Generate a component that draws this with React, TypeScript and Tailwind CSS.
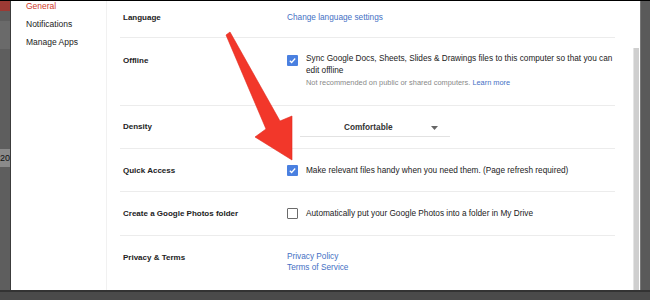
const font = { fontFamily: '"Liberation Sans", Arial, sans-serif' }

function Check({ on }: { on: boolean }) {
  if (!on) {
    return <span className="block w-[11px] h-[11px] shrink-0 rounded-[1px] border-[1.5px] border-[#6b6b6b] bg-white" />
  }
  return (
    <span className="flex w-[11px] h-[11px] shrink-0 items-center justify-center rounded-[1px] bg-[#4a80e0]">
      <svg width="9" height="9" viewBox="0 0 10 10">
        <path d="M2 5.2l2 2 4-4.4" fill="none" stroke="#fff" strokeWidth="1.4" />
      </svg>
    </span>
  )
}

function Row({ label, h, top, children, last }: { label: string; h: number; top: number; children: React.ReactNode; last?: boolean }) {
  return (
    <div
      className={`flex ${last ? '' : 'border-b border-[#ececec]'}`}
      style={{ height: h, paddingTop: top }}
    >
      <div className="w-[167px] pl-[3px] font-bold text-[8px] leading-[13px] text-[#222]">{label}</div>
      <div className="flex-1">{children}</div>
    </div>
  )
}

export default function App() {
  return (
    <div className="relative w-[650px] h-[300px] overflow-hidden bg-[#565656]" style={font}>
      <div className="h-[1px] bg-black" />
      <div className="flex h-[289px]">
        {/* background strip of the page behind the dialog */}
        <div className="w-[11px] flex flex-col border-r border-[#3c3c3c] bg-[#5e5e5e]">
          <div className="h-[10px] bg-[#9c3a34]" />
          <div className="h-[28px] mt-[10px] bg-[#6a6a6a]" />
          <div className="mt-[100px] h-[18px] bg-[#8a8a8a] text-[9px] leading-[18px] text-[#111] overflow-hidden">20</div>
        </div>
        <div className="flex flex-1 bg-white">
          <div className="w-[96px] border-r border-[#f1f1f1] pl-[15px] text-[8.5px] leading-[18px] text-[#222]">
            <div className="-mt-[4px] text-[#d0392b]">General</div>
            <div>Notifications</div>
            <div>Manage Apps</div>
          </div>
          <div className="flex-1 flex">
            <div className="w-[495px] ml-[13px] text-[8.25px] text-[#222]">
              <Row label="Language" h={37} top={10}>
                <a className="block leading-[13px] text-[#4470c4]">Change language settings</a>
              </Row>
              <Row label="Offline" h={68} top={16}>
                <div className="flex gap-[8px] pt-[1px]">
                  <Check on />
                  <div className="leading-[12px] -mt-[2px]">
                    <div>Sync Google Docs, Sheets, Slides &amp; Drawings files to this computer so that you can edit offline</div>
                    <div className="text-[7.4px] text-[#888]">
                      Not recommended on public or shared computers. <span className="text-[#4470c4]">Learn more</span>
                    </div>
                  </div>
                </div>
              </Row>
              <Row label="Density" h={43} top={14}>
                <div className="ml-[13px] w-[150px] h-[17px] flex items-center border-b border-[#e2e2e2] pl-[44px] pr-[12px] font-bold text-[#333]">
                  <span className="flex-1">Comfortable</span>
                  <svg width="7" height="4" viewBox="0 0 7 4"><path d="M0 0h7L3.5 4z" fill="#666" /></svg>
                </div>
              </Row>
              <Row label="Quick Access" h={43} top={15}>
                <div className="flex items-center gap-[8px] leading-[13px]">
                  <Check on />
                  <span>Make relevant files handy when you need them. (Page refresh required)</span>
                </div>
              </Row>
              <Row label="Create a Google Photos folder" h={44} top={15}>
                <div className="flex items-center gap-[8px] leading-[13px]">
                  <Check on={false} />
                  <span>Automatically put your Google Photos into a folder in My Drive</span>
                </div>
              </Row>
              <Row label="Privacy & Terms" h={54} top={15} last>
                <div className="leading-[11px] text-[#4470c4]">
                  <div>Privacy Policy</div>
                  <div>Terms of Service</div>
                </div>
              </Row>
            </div>
            <div className="flex-1 flex justify-end pr-[1px]">
              <div className="w-[6px] mt-[47px] bg-[#cfcfcf] border-l border-[#e4e4e4]" />
            </div>
          </div>
        </div>
        <div className="w-[10px] bg-[#5a5a5a] border-l border-[#777]" />
      </div>
      <div className="h-[10px] border-t-2 border-[#333] bg-[#4a4a4a]" />

      <svg className="absolute left-0 top-0 pointer-events-none" width="650" height="300">
        <polygon
          points="226,35 230,32 280,121 292,116 292,160 255,137 266,129"
          fill="#f2372a"
          stroke="#e02a1e"
          strokeWidth="0.6"
          strokeLinejoin="round"
        />
      </svg>
    </div>
  )
}
